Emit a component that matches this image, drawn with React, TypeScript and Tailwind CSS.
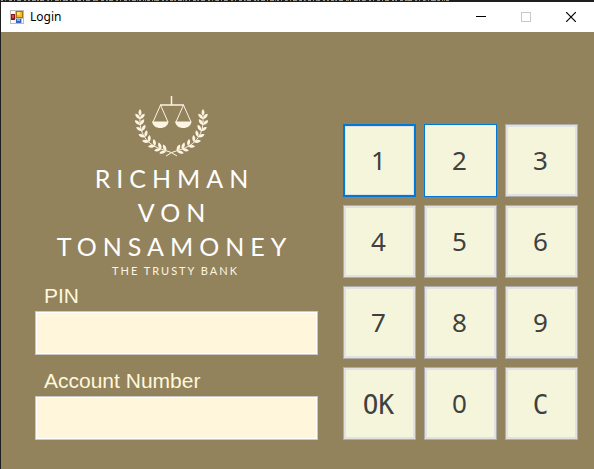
import React from "react";

type Leaf = { x: number; y: number; heading: number };

// Stem nodes of one laurel branch, from the tip down; heading is degrees clockwise from straight up.
const leaves: Leaf[] = [
  { x: 9, y: 24, heading: 0 },
  { x: 9, y: 30, heading: -6 },
  { x: 11, y: 36, heading: -14 },
  { x: 14, y: 42, heading: -26 },
  { x: 18, y: 47, heading: -38 },
  { x: 24, y: 51, heading: -52 },
  { x: 30, y: 54, heading: -62 },
  { x: 35, y: 56, heading: -66 },
];

const leafPath = "M0 0C-2 -2 -2 -5 0 -7C2 -5 2 -2 0 0Z";

function Branch() {
  return (
    <g>
      <path
        d="M9 22C8 38 15 50 33 55Q41 57 46 61"
        fill="none"
        stroke="#fdf5e2"
        strokeWidth="1"
      />
      <path d={leafPath} transform="translate(9 21)" />
      {leaves.map((leaf) => (
        <g key={leaf.y} transform={`translate(${leaf.x} ${leaf.y}) rotate(${leaf.heading})`}>
          <path d={leafPath} transform="rotate(-42)" />
          <path d={leafPath} transform="rotate(42)" />
        </g>
      ))}
    </g>
  );
}

function Emblem() {
  return (
    <svg viewBox="0 0 80 64" className="h-16 w-20" fill="#fdf5e2" aria-hidden="true">
      <Branch />
      <g transform="translate(81 0) scale(-1 1)">
        <Branch />
      </g>
      <g fill="none" stroke="#fdf5e2">
        <path d="M40.500 1V10" strokeWidth="1.500" />
        <path d="M29 10H53" strokeWidth="1.500" />
        <path d="M29.500 10L22 27M29.500 10L37 27M52.500 10L45 27M52.500 10L60 27" />
      </g>
      <path d="M21 26.500H37.500C37 31 33 33 29.500 33C25 33 22 31 21 26.500Z" />
      <path d="M44 26.500H60.500C60 31 56 33 52.500 33C48 33 45 31 44 26.500Z" />
    </svg>
  );
}

function FormIcon() {
  return (
    <svg viewBox="0 0 14 14" className="size-3.5" shapeRendering="crispEdges" aria-hidden="true">
      <rect width="14" height="14" fill="#bcbcbc" />
      <path d="M1 1H5V4H1ZM1 10H5V13H1ZM12 9H13V13H12Z" fill="#fff" />
      <path d="M5 9H6V13H5Z" fill="#eee" />
      <rect x="1" y="4" width="4" height="6" fill="#8f1717" />
      <rect x="2" y="5" width="2" height="3" fill="#e04a3b" />
      <rect x="6" y="1" width="7" height="7" fill="#a87500" />
      <rect x="7" y="2" width="5" height="5" fill="#f6bd27" />
      <rect x="7" y="2" width="3" height="3" fill="#ffe07a" />
      <rect x="6" y="9" width="5" height="4" fill="#3267c8" />
      <rect x="7" y="9" width="3" height="2" fill="#7fb2f5" />
    </svg>
  );
}

function TitleBar() {
  return (
    <header className="flex h-[30px] items-center bg-white pl-[9px]">
      <FormIcon />
      <h1 className="ml-1.5 flex-1 font-['Noto_Sans',sans-serif] text-[12px] leading-4 text-black">
        Login
      </h1>
      <button type="button" aria-label="Minimize" className="flex h-full w-[46px] items-center justify-center">
        <svg viewBox="0 0 10 10" className="size-2.5" shapeRendering="crispEdges">
          <path d="M0 4H10V5H0Z" fill="#000" />
        </svg>
      </button>
      <button type="button" aria-label="Maximize" disabled className="flex h-full w-11 items-center justify-center">
        <svg viewBox="0 0 10 10" className="size-2.5" shapeRendering="crispEdges">
          <path d="M0 0H10V10H0ZM1 1V9H9V1Z" fill="#c8c8c8" fillRule="evenodd" />
        </svg>
      </button>
      <button type="button" aria-label="Close" className="flex h-full w-[46px] items-center justify-center">
        <svg viewBox="0 0 10 10" className="size-2.5" stroke="#000" strokeWidth="1.200">
          <path d="M0 0L10 10M10 0L0 10" />
        </svg>
      </button>
    </header>
  );
}

function Field({ id, label, type }: { id: string; label: string; type: string }) {
  return (
    <div>
      <label
        htmlFor={id}
        className="block pl-[9px] font-['Liberation_Sans',Arial,sans-serif] text-[21px] leading-[30px] text-[#fff8dc]"
      >
        {label}
      </label>
      <input
        id={id}
        type={type}
        className="block h-11 w-full border border-[#c8c8c8] bg-[#fff6dc] px-2 text-[21px] outline-1 -outline-offset-2 outline-white"
      />
    </div>
  );
}

const keys = ["1", "2", "3", "4", "5", "6", "7", "8", "9", "OK", "0", "C"];

function keyFrame(key: string) {
  if (key === "1") return "border-2 border-[#0078d7] inset-ring-1 inset-ring-[#e1e1e1]";
  if (key === "2") return "border border-[#0078d7] inset-ring-1 inset-ring-[#e5f1fb]";
  return "border border-[#adadad] inset-ring-2 inset-ring-[#e1e1e1]";
}

function keyFont(key: string) {
  return /\d/.test(key)
    ? "pb-0.5 font-['Noto_Sans',sans-serif]"
    : "pt-0.5 font-['DejaVu_Sans_Mono',monospace]";
}

function Keypad() {
  return (
    <div className="grid grid-cols-3 gap-2">
      {keys.map((key) => (
        <button
          key={key}
          type="button"
          className={`size-[73px] bg-[#f5f5dc] pr-0.5 text-[26px] leading-8 text-[#404040] ${keyFrame(key)} ${keyFont(key)}`}
        >
          {key}
        </button>
      ))}
    </div>
  );
}

export default function App() {
  return (
    <div className="flex min-h-screen flex-col border-l border-[#1e1e1e] bg-[#93835d]">
      <div className="h-0.5 overflow-hidden bg-[#1e1e1e]">
        <svg width="450" height="2" aria-hidden="true">
          <path d="M0 0.500H450" stroke="#9a9a9a" strokeDasharray="2 2 1 3 3 2 1 2 4 3" />
          <path d="M4 0.500H450" stroke="#4b87a8" strokeDasharray="1 11 1 17" />
          <path d="M8 0.500H450" stroke="#b08a58" strokeDasharray="1 19 1 8" />
        </svg>
      </div>
      <TitleBar />
      <main className="flex items-end gap-[25px] pt-[63px] pr-4 pb-[29px] pl-[34px]">
        <section className="flex-1">
          <div className="flex flex-col items-center pr-3 font-['Lato',sans-serif] text-white">
            <Emblem />
            <h2 className="mt-0.5 pl-2 text-center text-[25px] leading-[34px] tracking-[6px]">
              RICHMAN
              <br />
              VON
              <br />
              TONSAMONEY
            </h2>
            <p className="pl-2.5 text-[11px] leading-4 tracking-[2px] text-[#fdf5e2]">THE TRUSTY BANK</p>
          </div>
          <form className="mt-0.5 flex flex-col gap-[11px]">
            <Field id="pin" label="PIN" type="password" />
            <Field id="account" label="Account Number" type="text" />
          </form>
        </section>
        <Keypad />
      </main>
    </div>
  );
}
